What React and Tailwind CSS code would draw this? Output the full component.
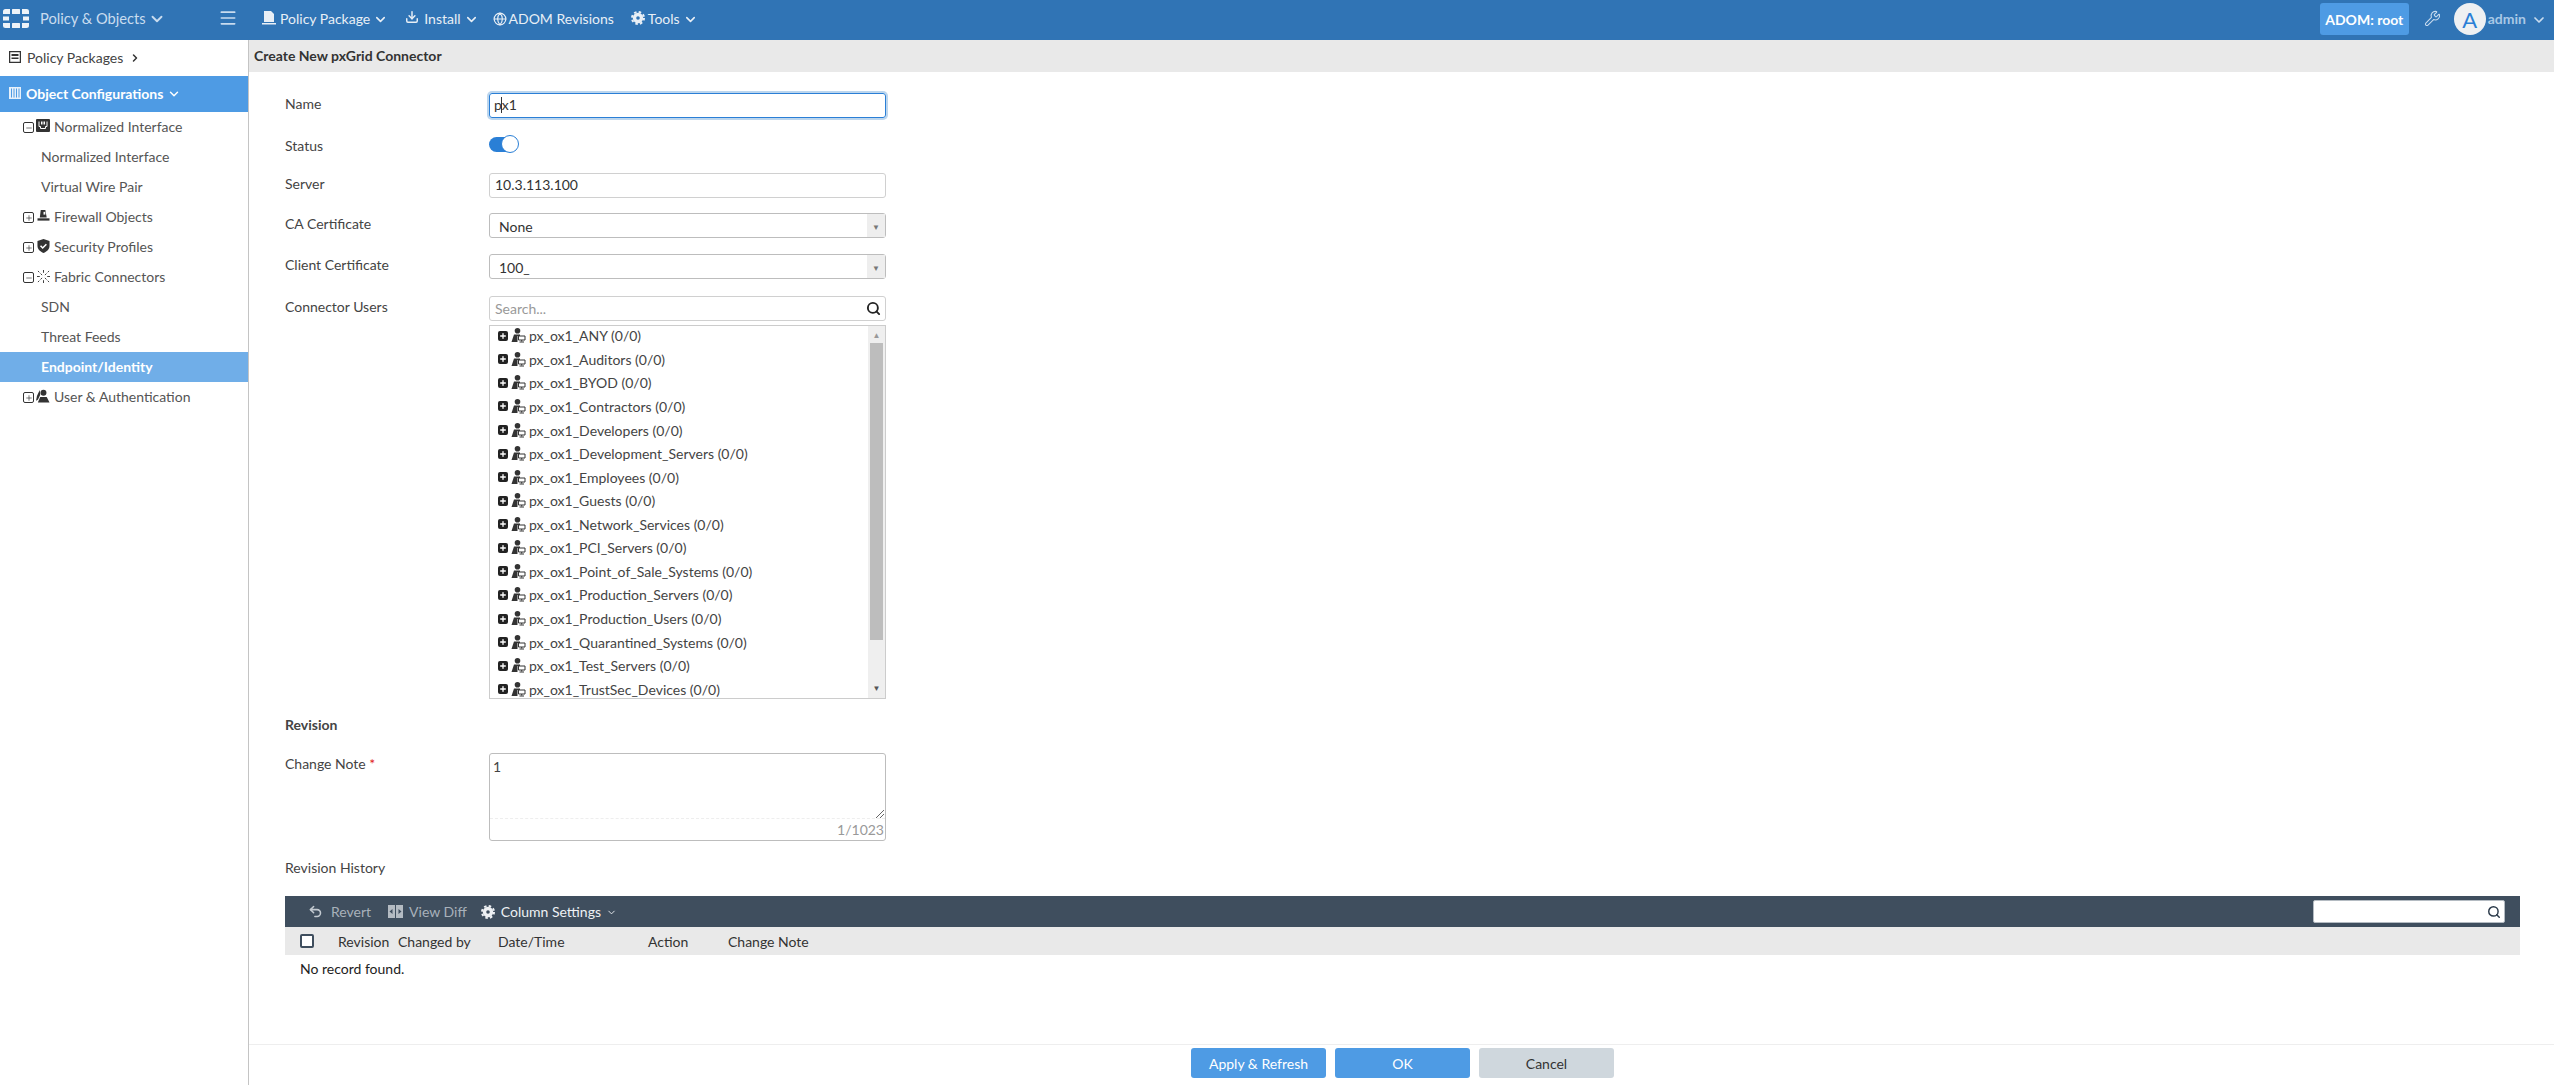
import { ChevronDown, ChevronRight, Menu, Search, Wrench, Globe, Download, Undo2, Plus, Minus } from 'lucide-react';

const sideRows = [
  { label: 'Normalized Interface', tree: 'minus', icon: 'iface' },
  { label: 'Normalized Interface' },
  { label: 'Virtual Wire Pair' },
  { label: 'Firewall Objects', tree: 'plus', icon: 'firewall' },
  { label: 'Security Profiles', tree: 'plus', icon: 'shield' },
  { label: 'Fabric Connectors', tree: 'minus', icon: 'fabric' },
  { label: 'SDN' },
  { label: 'Threat Feeds' },
  { label: 'Endpoint/Identity', active: true },
  { label: 'User & Authentication', tree: 'plus', icon: 'user' },
];

const connectorUsers = [
  'px_ox1_ANY (0/0)',
  'px_ox1_Auditors (0/0)',
  'px_ox1_BYOD (0/0)',
  'px_ox1_Contractors (0/0)',
  'px_ox1_Developers (0/0)',
  'px_ox1_Development_Servers (0/0)',
  'px_ox1_Employees (0/0)',
  'px_ox1_Guests (0/0)',
  'px_ox1_Network_Services (0/0)',
  'px_ox1_PCI_Servers (0/0)',
  'px_ox1_Point_of_Sale_Systems (0/0)',
  'px_ox1_Production_Servers (0/0)',
  'px_ox1_Production_Users (0/0)',
  'px_ox1_Quarantined_Systems (0/0)',
  'px_ox1_Test_Servers (0/0)',
  'px_ox1_TrustSec_Devices (0/0)',
];

function FortinetLogo() {
  return (
    <svg width="26" height="19" viewBox="0 0 26 19" fill="#eef3f8">
      <path d="M0 5V2.500A2.500 2.500 0 0 1 2.500 0H7v5z" />
      <rect x="9" y="0" width="8" height="5" rx="0.500" />
      <path d="M19 0h4.500A2.500 2.500 0 0 1 26 2.500V5h-7z" />
      <rect x="0" y="7.500" width="6" height="4" />
      <rect x="20" y="7.500" width="6" height="4" />
      <path d="M0 14h7v5H2.500A2.500 2.500 0 0 1 0 16.500z" />
      <rect x="9" y="14" width="8" height="5" rx="0.500" />
      <path d="M19 14h7v2.500a2.500 2.500 0 0 1-2.500 2.500H19z" />
    </svg>
  );
}

function TreeBox({ kind }) {
  return (
    <span className="mt-[3px] flex h-[11px] w-[11px] items-center justify-center rounded-[2px] border border-[#333]">
      {kind === 'plus' ? <Plus size={8} strokeWidth={2} color="#333" /> : <Minus size={8} strokeWidth={2} color="#333" />}
    </span>
  );
}

function SideIcon({ name }) {
  if (name === 'iface') {
    return (
      <svg width="14" height="14" viewBox="0 0 14 14">
        <rect width="14" height="13" rx="1" fill="#333" />
        <path d="M3 2.500v5h1.500v2h5v-2H11v-5M5.500 2.500v3M7 2.500v3M8.500 2.500v3" fill="none" stroke="#fff" strokeWidth="1" />
      </svg>
    );
  }
  if (name === 'firewall') {
    return (
      <svg width="13" height="12" viewBox="0 0 14 13" fill="#333">
        <path d="M4 0h5l1.500 8H3z" />
        <path d="M0.500 9h13v2.500H0.500z" />
        <path d="M7 2h2v3H7z" fill="#fff" />
      </svg>
    );
  }
  if (name === 'shield') {
    return (
      <svg width="13" height="14" viewBox="0 0 14 15">
        <path d="M7 0l6.500 2.200v5c0 3.800-3 6.200-6.500 7.800C3.500 13.400.5 11 .5 7.200v-5z" fill="#333" />
        <path d="M3.800 7.300l2.300 2.300 4-4" fill="none" stroke="#fff" strokeWidth="1.700" />
      </svg>
    );
  }
  if (name === 'fabric') {
    return (
      <svg width="13" height="13" viewBox="0 0 14 14" fill="none" stroke="#333" strokeWidth="1">
        <path d="M1 1l1.500 1.500M3.800 3.800l1.700 1.700M13 1l-1.500 1.500M10.200 3.800L8.500 5.500M1 13l1.500-1.500M3.800 10.200l1.700-1.700M13 13l-1.500-1.500M10.200 10.200L8.500 8.500M7 0v3M7 11v3M0 7h3M11 7h3" />
      </svg>
    );
  }
  return (
    <svg width="15" height="14" viewBox="0 0 15 14" fill="#333">
      <circle cx="8" cy="3.500" r="3.200" />
      <path d="M4.500 8h7l3 6H2z" />
      <path d="M4 0.500L1 7l-1 5 2-1 2.500-5z" />
    </svg>
  );
}

function Gear({ color, hole, size = 14, className = '' }) {
  return (
    <svg width={size} height={size} viewBox="0 0 14 14" className={className}>
      <circle cx="7" cy="7" r="5.200" fill={color} />
      <circle cx="7" cy="7" r="6" fill="none" stroke={color} strokeWidth="2" strokeDasharray="2.500 2.210" />
      <circle cx="7" cy="7" r="1.800" fill={hole} />
    </svg>
  );
}

function TopMenu({ icon, label, className = '' }) {
  return (
    <div className={`flex items-center text-[14px] text-[#e8eff6] ${className}`}>
      {icon}
      <span>{label}</span>
      <ChevronDown size={15} strokeWidth={2.5} className="ml-[3px] mt-[2px]" />
    </div>
  );
}

function UserRowIcon() {
  return (
    <svg width="15" height="15" viewBox="0 0 15 15" fill="#333">
      <circle cx="6.500" cy="2.800" r="2.800" />
      <path d="M3 6.500h6v1.500H6.500v6H0.500z" />
      <path d="M7.500 8h6.500v4H7.500z" fill="#fff" stroke="#333" strokeWidth="1" />
      <path d="M10.700 12v1.500M8.500 14h4.500" stroke="#333" strokeWidth="1" />
    </svg>
  );
}

function FormRow({ label, className = '', children }) {
  return (
    <div className={`flex ${className}`}>
      <div className="w-[204px] shrink-0 text-[14px] leading-[22px] text-[#444]">{label}</div>
      {children}
    </div>
  );
}

function SelectBox({ value }) {
  return (
    <div className="flex h-[25px] w-[397px] items-center rounded-[3px] border border-[#bdbdbd] bg-white">
      <span className="flex-1 pl-[9px] pt-[2px] text-[14px] text-[#333]">{value}</span>
      <span className="flex h-full w-[18px] items-center justify-center bg-[#eee] pt-[2px] text-[8px] text-[#777]">▼</span>
    </div>
  );
}

export default function App() {
  return (
    <div className="flex h-[1085px] w-[2554px] flex-col overflow-hidden bg-white font-['Lato',sans-serif]">
      <header className="flex h-10 shrink-0 items-center bg-[#3074b5] pb-[3px] text-white">
        <div className="flex w-[248px] items-center pl-[3px]">
          <FortinetLogo />
          <span className="ml-[11px] text-[14.700px] text-[#c9dcef]">Policy &amp; Objects</span>
          <ChevronDown size={18} strokeWidth={2.500} className="ml-[2px] mt-[2px] text-[#c9dcef]" />
          <Menu size={20} strokeWidth={2} className="ml-[52px] text-[#c9dcef]" />
        </div>
        <TopMenu
          className="ml-[14px]"
          label="Policy Package"
          icon={
            <svg width="14" height="14" viewBox="0 0 14 14" fill="#e8eff6" className="mr-[4px] mb-[2px]">
              <path d="M2 0h7l3 3v8H2z" />
              <path d="M0 12h14v1.500H0z" />
            </svg>
          }
        />
        <TopMenu
          className="ml-[17px]"
          label="Install"
          icon={<Download size={14} strokeWidth={2.500} className="mr-[5px] mb-[3px]" />}
        />
        <div className="ml-[14px] flex items-center text-[14px] text-[#e8eff6]">
          <Globe size={14} strokeWidth={2} className="mr-[2px]" />
          <span>ADOM Revisions</span>
        </div>
        <TopMenu
          className="ml-[17px]"
          label="Tools"
          icon={<Gear color="#e8eff6" hole="#3074b5" className="mr-[3px] mb-[2px]" />}
        />
        <div className="ml-auto flex items-center">
          <div className="mt-[1px] flex h-8 w-[89px] items-center justify-center rounded-[3px] bg-[#4e9be4] text-[14px] font-bold text-white">
            ADOM: root
          </div>
          <Wrench size={17} strokeWidth={1.500} className="ml-[15px] text-[#c9dcef]" />
          <div className="ml-[13px] mt-[1px] flex h-8 w-8 items-center justify-center rounded-full bg-[#eef0f2] text-[22px] text-[#2a7fd6]">A</div>
          <span className="ml-[2px] text-[14px] font-bold text-[#a9c8e6]">admin</span>
          <ChevronDown size={16} strokeWidth={2.500} className="ml-[5px] mr-[7px] mt-[2px] text-[#c9dcef]" />
        </div>
      </header>

      <div className="flex min-h-0 flex-1">
        <aside className="w-[249px] shrink-0 border-r border-[#c4c4c4] text-[14px] text-[#555]">
          <div className="flex h-9 items-center pb-[2px] pl-[9px] text-[#444]">
            <svg width="12" height="12" viewBox="0 0 12 12" className="mr-[6px]">
              <rect x="0.500" y="0.500" width="11" height="11" fill="none" stroke="#333" strokeWidth="1.500" />
              <path d="M2.500 3h7v2h-7zM2.500 6.500h7V8h-7z" fill="#333" />
            </svg>
            Policy Packages
            <ChevronRight size={12} strokeWidth={3} className="ml-[6px] mt-[1px] text-[#333]" />
          </div>
          <div className="flex h-9 items-center bg-[#4e9be4] pb-[2px] pl-[9px] font-bold text-white">
            <svg width="12" height="12" viewBox="0 0 12 12" className="mr-[5px]">
              <rect width="12" height="12" fill="#e6f0fa" />
              <path d="M2.500 1.500v9M5 1.500v9M7.500 1.500v9M10 1.500v9" stroke="#4e9be4" strokeWidth="1" />
            </svg>
            Object Configurations
            <ChevronDown size={14} strokeWidth={2.500} className="ml-[4px] mt-[2px]" />
          </div>
          {sideRows.map((row, i) => (
            <div
              key={i}
              className={`flex h-[30px] items-center pb-[2px] ${row.active ? 'bg-[#70aee8] font-bold text-white' : ''} ${row.tree ? 'pl-[23px]' : 'pl-[41px]'}`}
            >
              {row.tree && (
                <>
                  <TreeBox kind={row.tree} />
                  <span className="ml-[2px] mr-[4px] flex w-[14px] justify-center"><SideIcon name={row.icon} /></span>
                </>
              )}
              {row.label}
            </div>
          ))}
        </aside>

        <main className="flex min-w-0 flex-1 flex-col">
          <div className="flex h-[32px] shrink-0 items-center bg-[#e9e9e9] pb-[2px] pl-[5px] text-[14px] font-bold text-[#333]">
            Create New pxGrid Connector
          </div>

          <div className="min-h-0 flex-1 pl-[36px] pr-[34px] pt-[21px]">
            <FormRow label="Name">
              <div className="flex h-[25px] w-[397px] items-center rounded-[3px] border border-[#2a7fd6] pb-[2px] pl-[4px] text-[14px] text-[#333] shadow-[0_0_0_2px_#bcd6ee]">
                p<span className="ml-[-1px] h-4 w-px bg-[#333]" />x1
              </div>
            </FormRow>
            <FormRow label="Status" className="mt-[17px]">
              <div className="relative h-[18px] w-[30px]">
                <div className="absolute left-0 top-[1.500px] h-[15px] w-[26px] rounded-full bg-[#2a7fd6]" />
                <div className="absolute right-0 top-0 h-[18px] w-[18px] rounded-full border border-[#2a7fd6] bg-white" />
              </div>
            </FormRow>
            <FormRow label="Server" className="mt-[16px]">
              <div className="flex h-[25px] w-[397px] items-center rounded-[3px] border border-[#d0d0d0] pb-[2px] pl-[5px] text-[14px] text-[#333]">
                10.3.113.100
              </div>
            </FormRow>
            <FormRow label="CA Certificate" className="mt-[15px]">
              <SelectBox value="None" />
            </FormRow>
            <FormRow label="Client Certificate" className="mt-[16px]">
              <SelectBox value="100_" />
            </FormRow>
            <FormRow label="Connector Users" className="mt-[17px]">
              <div className="w-[397px]">
                <div className="flex h-[25px] items-center rounded-[3px] border border-[#d0d0d0] pb-[1px] pl-[5px] text-[14px] text-[#999]">
                  <span className="flex-1">Search...</span>
                  <Search size={15} strokeWidth={3} className="mr-[4px] text-[#222]" />
                </div>
                <div className="mt-[4px] flex h-[374px] overflow-hidden border border-[#ccc]">
                  <div className="mt-[-2px] flex-1 pl-[8px] text-[14px] text-[#444]">
                    {connectorUsers.map((name) => (
                      <div key={name} className="flex h-[23.570px] items-center">
                        <span className="flex h-[10px] w-[10px] items-center justify-center rounded-[2px] bg-[#222]">
                          <Plus size={8} strokeWidth={4} color="#fff" />
                        </span>
                        <span className="ml-[3px] mr-[3px] flex"><UserRowIcon /></span>
                        {name}
                      </div>
                    ))}
                  </div>
                  <div className="flex w-[17px] shrink-0 flex-col items-center bg-[#efefef] pt-[4px] text-[8px] text-[#999]">
                    <div className="h-[10px] leading-[10px]">▲</div>
                    <div className="mt-[3px] h-[297px] w-[13px] bg-[#bdbdbd]" />
                    <div className="mt-auto mb-[5px] h-[10px] leading-[10px] text-[#555]">▼</div>
                  </div>
                </div>
              </div>
            </FormRow>

            <div className="mt-[14px] text-[14px] font-bold leading-[24px] text-[#444]">Revision</div>
            <FormRow label={<>Change Note <span className="text-[#e02020]">*</span></>} className="mt-[16px]">
              <div className="flex h-[88px] w-[397px] flex-col rounded-[3px] border border-[#bdbdbd]">
                <div className="relative flex-1 border-b border-dashed border-[#eee] pl-[3px] pt-[1px] text-[14px] leading-[24px] text-[#444]">
                  1
                  <svg width="9" height="9" viewBox="0 0 9 9" className="absolute bottom-0 right-[1px]">
                    <path d="M1 9l8-8M5 9l4-4" stroke="#666" strokeWidth="1" />
                  </svg>
                </div>
                <div className="h-[21px] pr-[1px] text-right text-[14px] leading-[21px] text-[#999]">1/1023</div>
              </div>
            </FormRow>
            <div className="mt-[15px] text-[14px] leading-[24px] text-[#444]">Revision History</div>

            <div className="mt-[16px]">
              <div className="flex h-[31px] items-center bg-[#3f4e5e] pl-[23px] pr-[15px] text-[14px]">
                <Undo2 size={15} strokeWidth={2.500} className="text-[#c3cad1]" />
                <span className="ml-[8px] text-[#a8b1ba]">Revert</span>
                <svg width="15" height="13" viewBox="0 0 15 13" className="ml-[17px]">
                  <rect width="15" height="13" fill="#b4bbc2" />
                  <path d="M7.500 0v13" stroke="#3f4e5e" strokeWidth="1" />
                  <path d="M1.500 6.500l3-2.500v5zM13.500 6.500l-3-2.500v5z" fill="#3f4e5e" />
                </svg>
                <span className="ml-[6px] text-[#a8b1ba]">View Diff</span>
                <Gear color="#eef1f4" hole="#3f4e5e" size={14} className="ml-[14px]" />
                <span className="ml-[6px] text-[#eef1f4]">Column Settings</span>
                <ChevronDown size={11} strokeWidth={2} className="ml-[5px] mt-[1px] text-[#eef1f4]" />
                <div className="ml-auto flex h-[23px] w-[192px] items-center justify-end rounded-[2px] border border-[#b4bbc2] bg-white pr-[3px]">
                  <Search size={14} strokeWidth={2.500} className="text-[#2b3a4a]" />
                </div>
              </div>
              <div className="flex h-[28px] items-center bg-[#e9e9e9] text-[14px] text-[#333]">
                <div className="w-[53px] pl-[15px]">
                  <div className="h-[14px] w-[14px] rounded-[2px] border-2 border-[#3f4e5e] bg-white" />
                </div>
                <div className="w-[60px]">Revision</div>
                <div className="w-[100px]">Changed by</div>
                <div className="w-[150px]">Date/Time</div>
                <div className="w-[80px]">Action</div>
                <div>Change Note</div>
              </div>
              <div className="flex h-[26px] items-center pl-[15px] text-[14px] text-[#222]">No record found.</div>
            </div>
          </div>

          <div className="flex h-[41px] shrink-0 justify-center gap-[9px] border-t border-[#eee] pt-[3px] text-[14px]">
            <button type="button" className="ml-[2px] h-[30px] w-[135px] rounded-[3px] bg-[#4e9be4] text-white">Apply &amp; Refresh</button>
            <button type="button" className="h-[30px] w-[135px] rounded-[3px] bg-[#4e9be4] text-white">OK</button>
            <button type="button" className="h-[30px] w-[135px] rounded-[3px] bg-[#cfd7dd] text-[#333]">Cancel</button>
          </div>
        </main>
      </div>
    </div>
  );
}
